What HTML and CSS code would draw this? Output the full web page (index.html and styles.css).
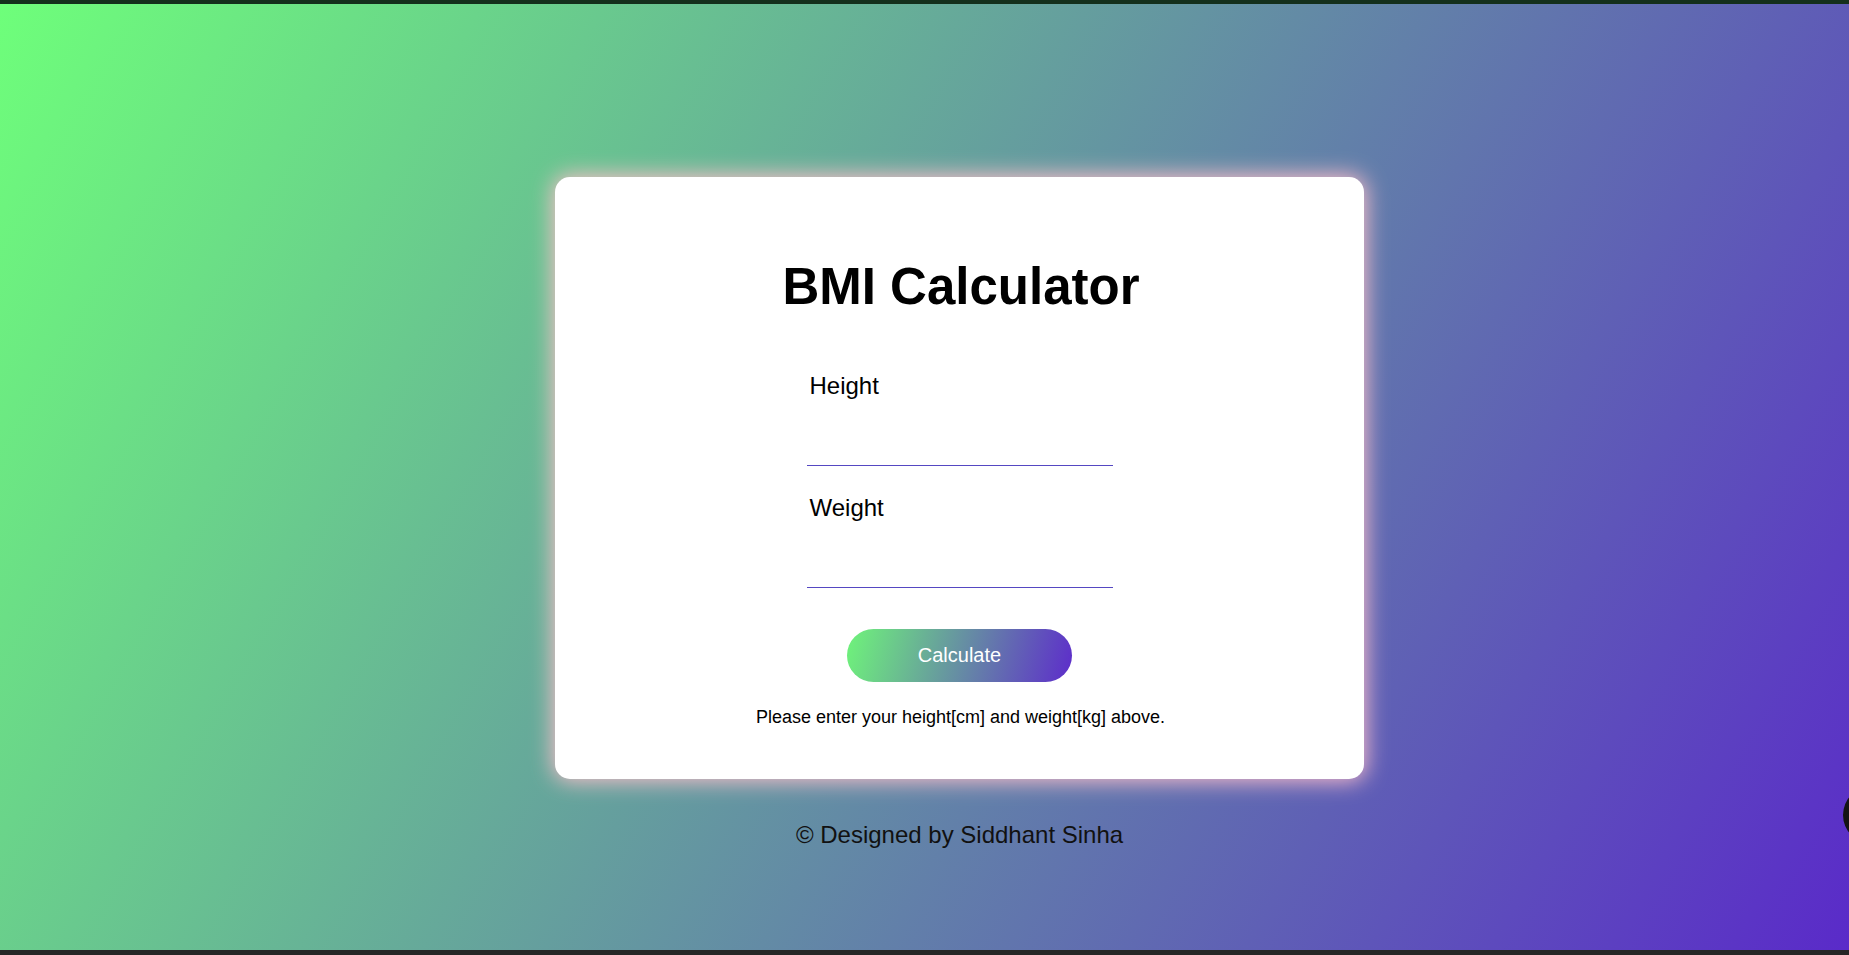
FILE: index.html
```html
<!DOCTYPE html>
<html lang="en">
<head>
<meta charset="utf-8">
<title>BMI Calculator</title>
<link rel="stylesheet" href="styles.css">
</head>
<body>
  <main class="page">
    <section class="card">
      <h1 class="title">BMI Calculator</h1>
      <div class="form">
        <label class="field-label" for="height">Height</label>
        <input class="field-input" id="height" type="text">
        <label class="field-label second" for="weight">Weight</label>
        <input class="field-input" id="weight" type="text">
      </div>
      <button class="calc-btn" type="button">Calculate</button>
      <p class="message">Please enter your height[cm] and weight[kg] above.</p>
    </section>
    <footer class="footer">© Designed by Siddhant Sinha</footer>
  </main>
  <div class="floating-dot"></div>
</body>
</html>
```

FILE: styles.css
```css
html, body {
  margin: 0;
  padding: 0;
}

body {
  height: 955px;
  box-sizing: border-box;
  overflow: hidden;
  border-top: 4px solid #14301c;
  border-bottom: 5px solid #262626;
  background: linear-gradient(120deg, #6eff7a 0%, #5a2ac9 100%);
  font-family: "Liberation Sans", Arial, sans-serif;
  color: #000;
}

.page {
  display: flex;
  flex-direction: column;
  align-items: center;
  padding: 173px 0 0 70px;
}

.card {
  width: 809px;
  height: 602px;
  box-sizing: border-box;
  padding: 81px 0 0;
  background: #fff;
  border-radius: 15px;
  box-shadow: 0 0 22px 2px #ffc0cb;
  display: flex;
  flex-direction: column;
  align-items: center;
}

.title {
  margin: 0;
  font-size: 51px;
  line-height: 57px;
  font-weight: 700;
  padding-left: 3px;
}

.form {
  width: 306px;
  margin-top: 57px;
  display: flex;
  flex-direction: column;
}

.field-label {
  display: block;
  font-size: 24px;
  line-height: 28px;
  padding-left: 3px;
  color: #000;
}

.field-label.second {
  margin-top: 28px;
}

.field-input {
  display: block;
  width: 306px;
  height: 66px;
  box-sizing: border-box;
  border: none;
  border-bottom: 1px solid #5547c2;
  background: transparent;
  outline: none;
  font-family: inherit;
  font-size: 20px;
  padding: 0;
  margin: 0;
}

.calc-btn {
  margin-top: 41px;
  width: 225px;
  height: 53px;
  border: none;
  border-radius: 27px;
  background: linear-gradient(105deg, #6ff47a 0%, #5d2ccb 100%);
  color: #fff;
  font-family: inherit;
  font-size: 20px;
  cursor: pointer;
  padding: 0;
}

.message {
  margin: 25px 0 0;
  font-size: 18px;
  line-height: 21px;
  padding-left: 2px;
}

.footer {
  margin-top: 42px;
  font-size: 24px;
  line-height: 28px;
  color: #111;
}

.floating-dot {
  position: fixed;
  top: 786px;
  right: -52px;
  width: 58px;
  height: 58px;
  border-radius: 50%;
  background: #141414;
}
```
